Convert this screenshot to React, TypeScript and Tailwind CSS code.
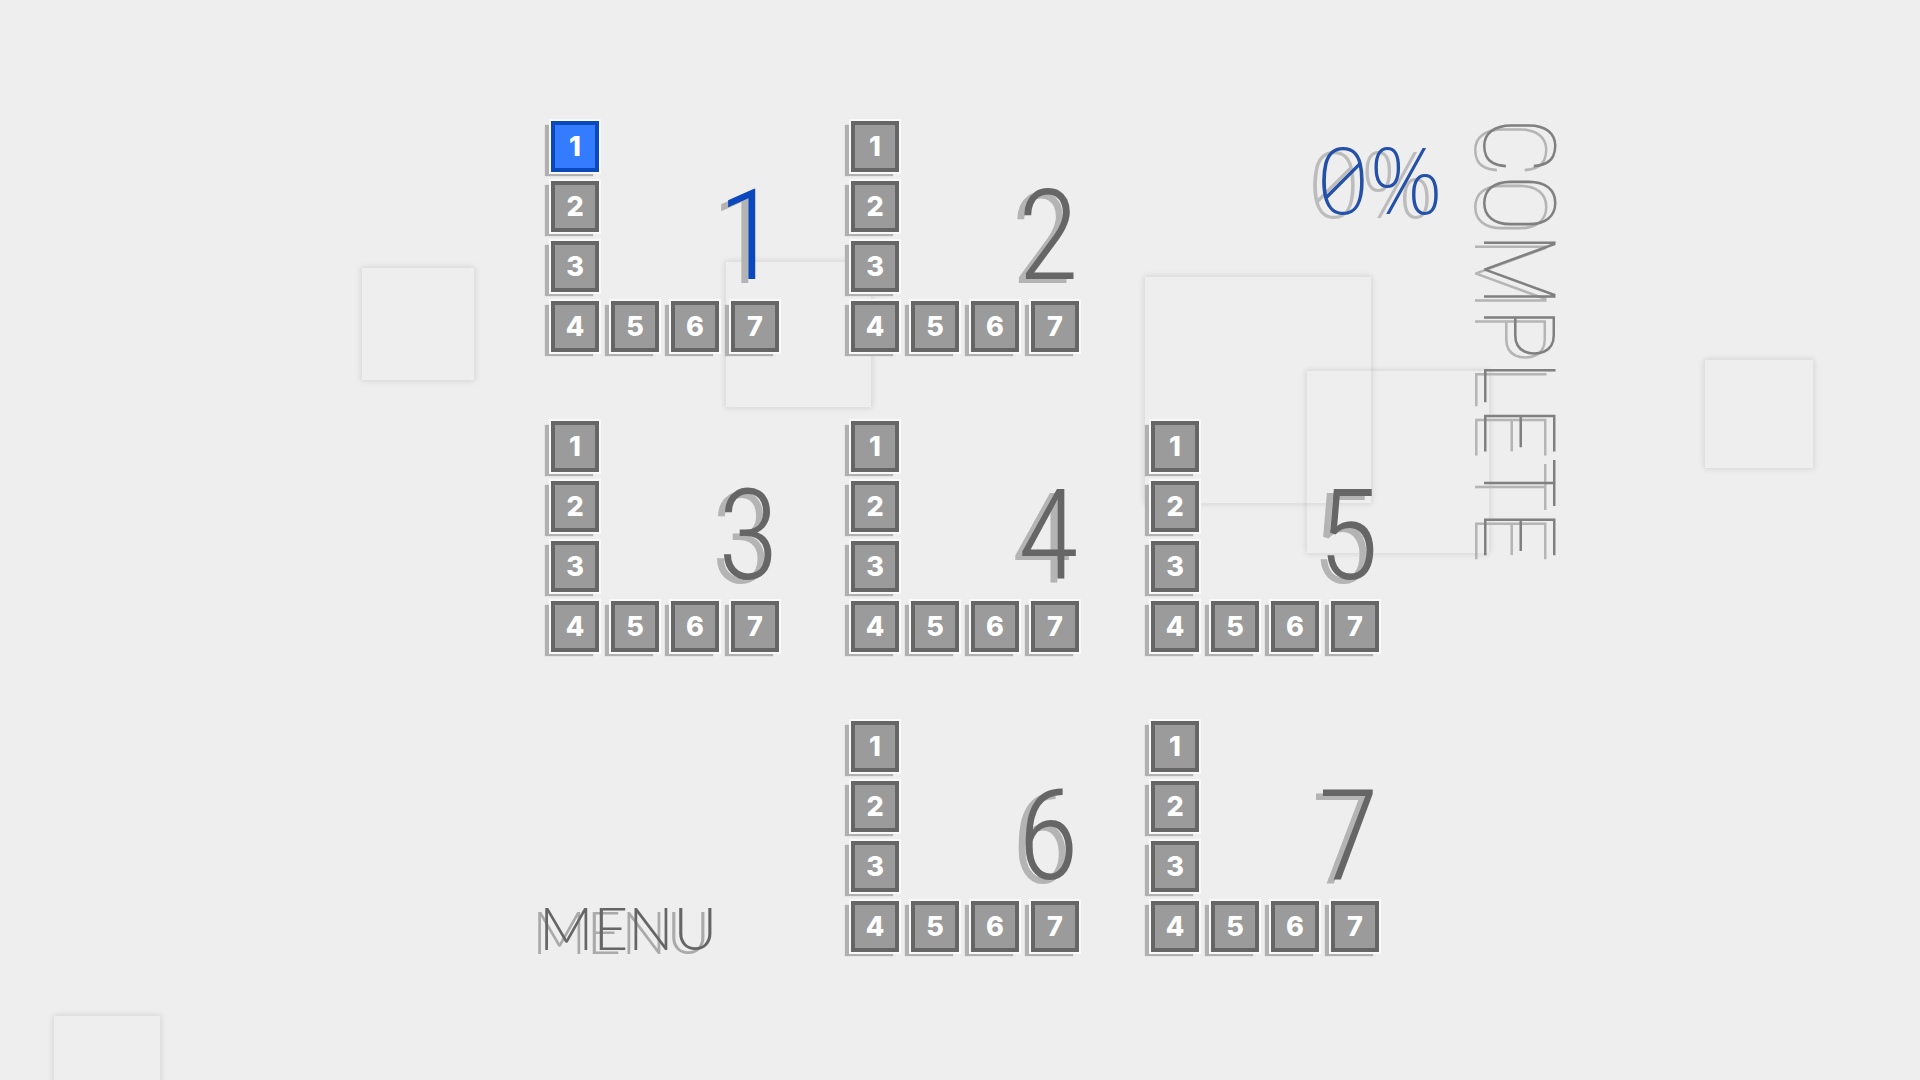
import { useState } from 'react';

const worlds = [1, 2, 3, 4, 5, 6, 7];
const levels = [1, 2, 3, 4, 5, 6, 7];

// first four levels run down the left side, the rest along the bottom
const cells = [
  'col-start-1 row-start-1',
  'col-start-1 row-start-2',
  'col-start-1 row-start-3',
  'col-start-1 row-start-4',
  'col-start-2 row-start-4',
  'col-start-3 row-start-4',
  'col-start-4 row-start-4',
];

const places = [
  'col-start-1 row-start-1',
  'col-start-2 row-start-1',
  'col-start-1 row-start-2',
  'col-start-2 row-start-2',
  'col-start-3 row-start-2',
  'col-start-2 row-start-3',
  'col-start-3 row-start-3',
];

const squares = [
  'left-[362px] top-[268px] size-28',
  'left-[726px] top-[262px] size-[145px]',
  'left-[1145px] top-[277px] size-[226px]',
  'left-[1307px] top-[371px] size-[182px]',
  'left-[1705px] top-[360px] size-[108px]',
  'left-[54px] top-[1016px] size-[106px]',
];

interface WorldProps {
  world: number;
  place: string;
  current: string;
  onSelect: (id: string) => void;
}

function World({ world, place, current, onSelect }: WorldProps) {
  const active = current.startsWith(`${world}-`);

  return (
    <section className={`grid grid-cols-[repeat(4,48px)] grid-rows-[repeat(4,51px)] gap-x-3 gap-y-[9px] ${place}`}>
      <h2
        className={`col-span-3 col-start-2 row-span-3 row-start-1 self-end text-right font-['Roboto_Condensed',sans-serif] text-[126px] leading-[112px] font-light [text-shadow:-7px_4px_0_#b4b4b4] ${
          active ? 'text-[#0b47bd]' : 'text-[#666666]'
        }`}
      >
        {world}
      </h2>
      {levels.map((level, i) => {
        const id = `${world}-${level}`;
        return (
          <button
            key={id}
            type="button"
            onClick={() => onSelect(id)}
            className={`flex items-center justify-center border-4 font-['Inter',sans-serif] text-[27px] leading-none font-extrabold text-white shadow-[0_0_0_2px_#f9f9f9,-6px_4px_1px_0_#b0b0b0] ${cells[i]} ${
              id === current ? 'border-[#0b49bb] bg-[#347cff]' : 'border-[#666666] bg-[#9b9b9b]'
            }`}
          >
            {level}
          </button>
        );
      })}
    </section>
  );
}

export default function App() {
  const [current, setCurrent] = useState('1-1');

  return (
    <div className="relative min-h-screen overflow-hidden bg-[#eeeeee]">
      {squares.map((square) => (
        <div key={square} className={`absolute shadow-[0_0_6px_1px_rgba(0,0,0,0.11)] ${square}`} />
      ))}

      <main className="relative grid grid-cols-[1fr_auto_1fr] pt-[121px] pl-[10px]">
        <div className="col-start-2 grid grid-cols-[repeat(3,228px)] gap-x-[72px] gap-y-[69px]">
          {worlds.map((world, i) => (
            <World key={world} world={world} place={places[i]} current={current} onSelect={setCurrent} />
          ))}
          <p className="col-start-3 row-start-1 -mr-16 pt-3 text-right font-['Noto_Sans',sans-serif] text-[92px] leading-none font-extralight whitespace-nowrap text-[#2350a8] slashed-zero [text-shadow:-9px_4px_0_#bcbcbc]">
            0%
          </p>
          <button
            type="button"
            className="col-start-1 row-start-3 -ml-3 self-end justify-self-start font-['Lato',sans-serif] text-[60px] leading-[50px] font-light text-[#666666] [text-shadow:-7px_4px_0_#aaaaaa]"
          >
            MENU
          </button>
        </div>
        <p className="col-start-3 row-start-1 -mt-1 ml-[86px] w-[106px] font-['Roboto_Condensed',sans-serif] text-[100px] leading-[106px] font-thin whitespace-nowrap text-[#808080] [text-shadow:4px_9px_0_#b5b5b5] [writing-mode:vertical-rl]">
          COMPLETE
        </p>
      </main>
    </div>
  );
}
